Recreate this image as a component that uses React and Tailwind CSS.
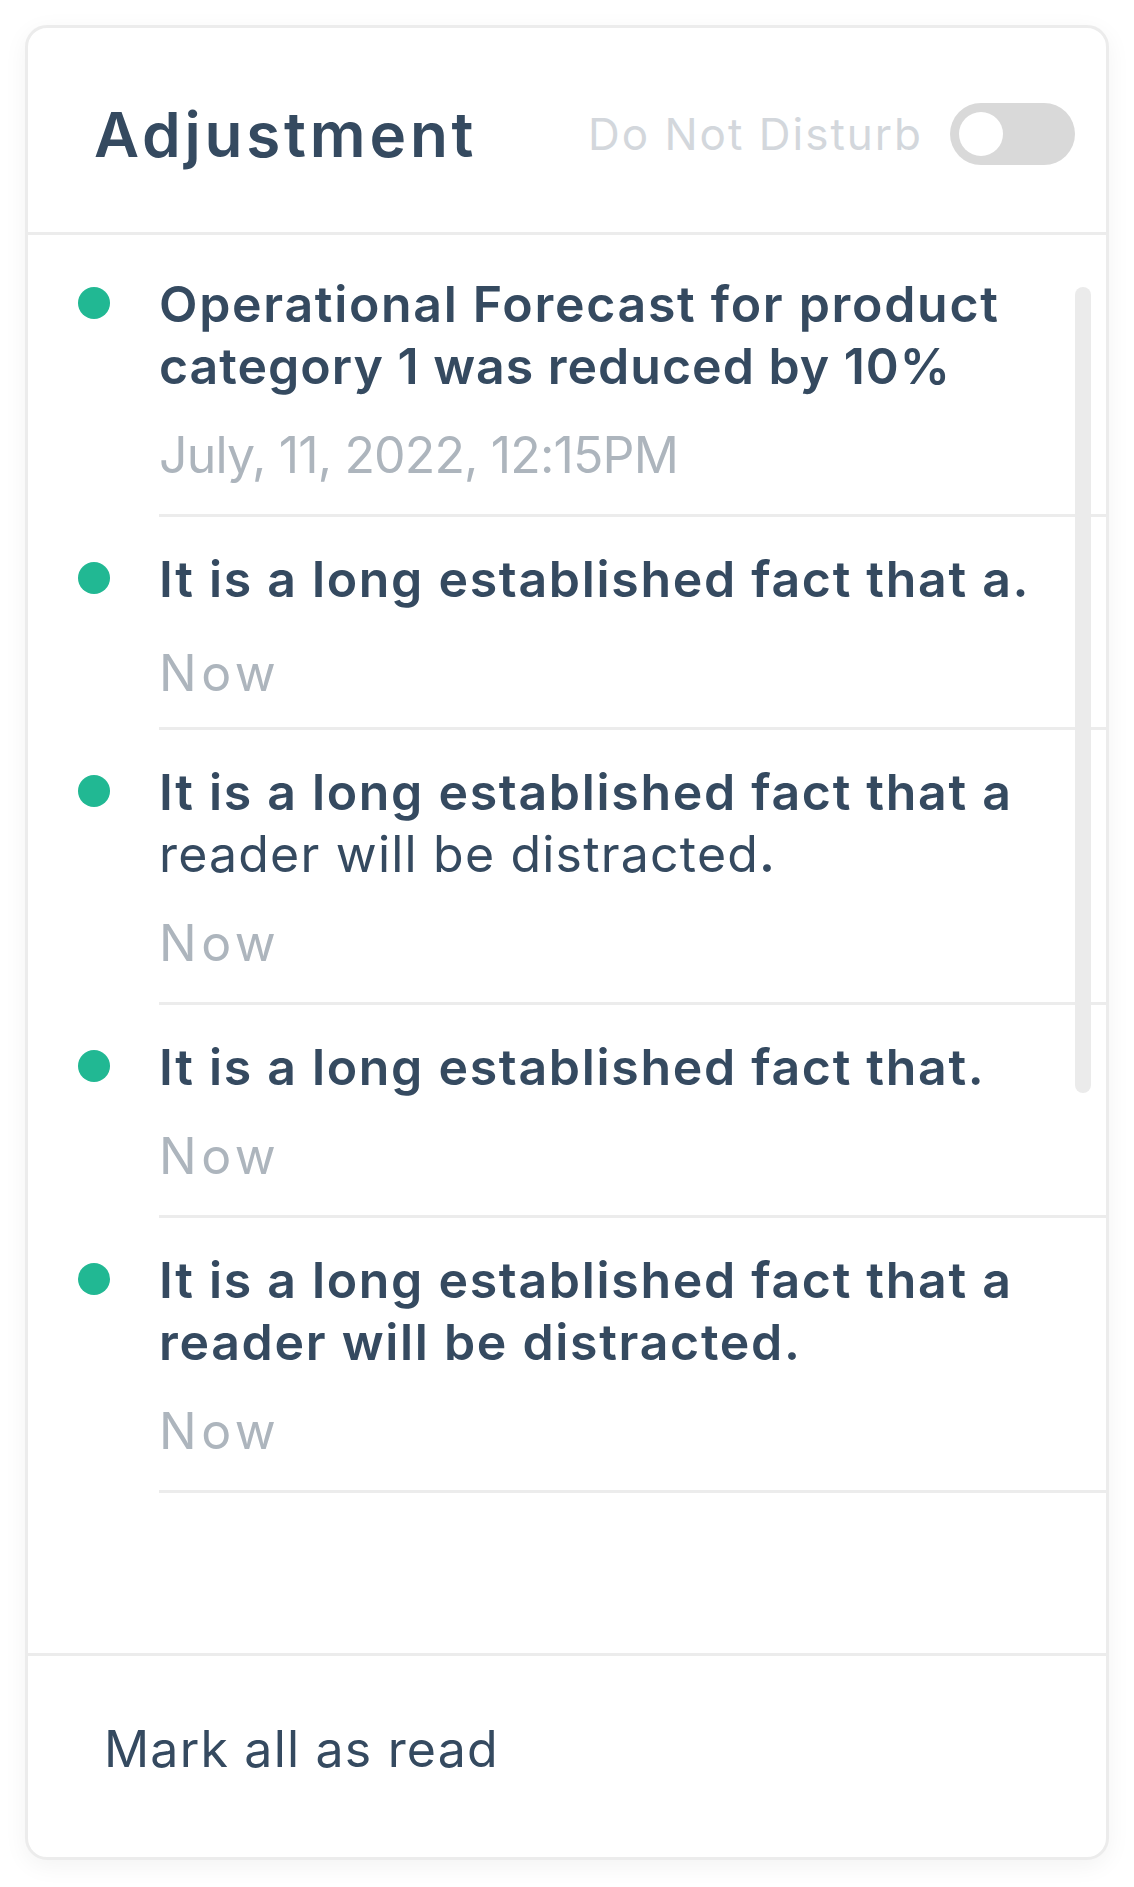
import { useState } from "react";

const notifications = [
  {
    id: 1,
    lines: [
      { text: "Operational Forecast for product" },
      { text: "category 1 was reduced by 10%", track: "tracking-[1px]" },
    ],
    time: "July, 11, 2022, 12:15PM",
    timeClass: "mt-[27px] tracking-[-0.85px]",
    pad: "pb-[28px]",
  },
  {
    id: 2,
    lines: [{ text: "It is a long established fact that a." }],
    time: "Now",
    timeClass: "mt-[32px] tracking-[4.5px]",
    pad: "pb-[23px]",
  },
  {
    id: 3,
    lines: [
      { text: "It is a long established fact that a" },
      { text: "reader will be distracted", light: true, tail: "." },
    ],
    time: "Now",
    timeClass: "mt-[27px] tracking-[4.5px]",
    pad: "pb-[28px]",
  },
  {
    id: 4,
    lines: [{ text: "It is a long established fact that." }],
    time: "Now",
    timeClass: "mt-[27px] tracking-[4.5px]",
    pad: "pb-[28px]",
  },
  {
    id: 5,
    lines: [{ text: "It is a long established fact that a" }, { text: "reader will be distracted." }],
    time: "Now",
    timeClass: "mt-[27px] tracking-[4.5px]",
    pad: "pb-[28px]",
  },
];

function Toggle({ on, onChange }) {
  return (
    <button
      onClick={() => onChange(!on)}
      className={`flex h-[62px] w-[125px] items-center rounded-full px-[9px] ${
        on ? "justify-end bg-[#21b893]" : "justify-start bg-[#d9d9d9]"
      }`}
    >
      <span className="block h-[44px] w-[44px] rounded-full bg-white" />
    </button>
  );
}

function NotificationItem({ item }) {
  return (
    <div className="flex pl-[50px]">
      <span className="mt-[45px] block h-[32px] w-[32px] shrink-0 rounded-full bg-[#21b893]" />
      <div className={`ml-[49px] flex-1 border-b-[3px] border-[#ececec] pt-[31px] ${item.pad}`}>
        {item.lines.map((line, i) => (
          <div
            key={i}
            className={`whitespace-nowrap text-[50px] leading-[62px] text-[#354a60] ${
              line.light ? "font-normal tracking-[1.2px]" : "font-semibold"
            } ${line.track || (line.light ? "" : "tracking-[1.7px]")}`}
          >
            {line.text}
            {line.tail && <span className="font-semibold">{line.tail}</span>}
          </div>
        ))}
        <div className={`text-[50px] leading-[62px] text-[#adb5bd] ${item.timeClass}`}>{item.time}</div>
      </div>
    </div>
  );
}

export default function App() {
  const [dnd, setDnd] = useState(false);

  return (
    <div className="min-h-screen bg-white pt-[25px] pl-[25px] font-['Inter',sans-serif]">
      <div className="flex h-[1835px] w-[1084px] flex-col overflow-hidden rounded-[22px] border-[3px] border-[#ececec] bg-white shadow-[0_6px_24px_rgba(0,0,0,0.05)]">
        <header className="flex h-[207px] shrink-0 items-center border-b-[3px] border-[#ececec] pt-[8px] pr-[31px] pl-[66px]">
          <h1 className="flex-1 text-[62px] font-semibold tracking-[3.8px] text-[#354a60]">Adjustment</h1>
          <span className="mr-[27px] text-[44px] tracking-[2px] text-[#d3d7dc]">Do Not Disturb</span>
          <Toggle on={dnd} onChange={setDnd} />
        </header>

        <div className="relative flex-1 pt-[7px]">
          {notifications.map((item) => (
            <NotificationItem key={item.id} item={item} />
          ))}
          {/* scroll thumb */}
          <div className="absolute top-[52px] right-[15px] h-[806px] w-[16px] rounded-full bg-[#ebebeb]" />
        </div>

        <footer className="h-[204px] shrink-0 border-t-[3px] border-[#ececec] pt-[62px] pl-[76px]">
          <button className="text-[50px] leading-[62px] tracking-[1.2px] text-[#354a60]">Mark all as read</button>
        </footer>
      </div>
    </div>
  );
}
